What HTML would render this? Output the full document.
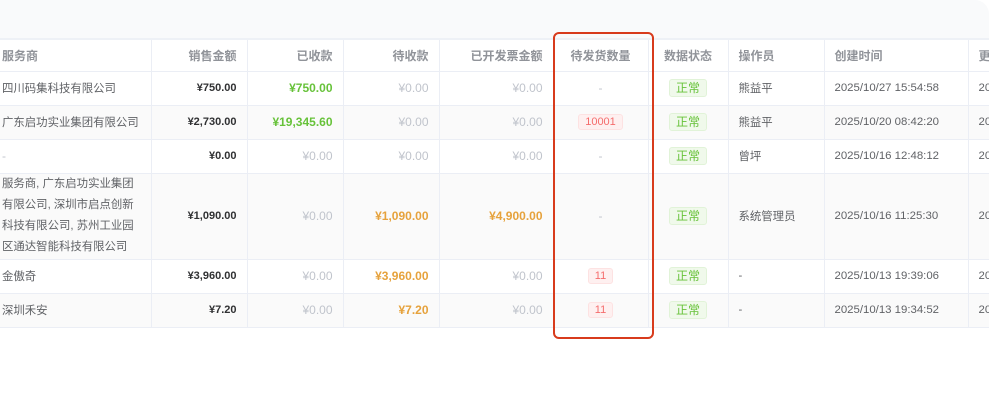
<!DOCTYPE html>
<html><head><meta charset="utf-8"><style>
*{margin:0;padding:0;box-sizing:border-box}
body{width:989px;height:405px;background:#fff;position:relative;overflow:hidden;font-family:"Liberation Sans","Noto Sans CJK SC",sans-serif;font-size:11.4px;color:#606266}
.top{position:absolute;left:0;top:0;width:989px;height:40px;background:#f9fafb;border-top-right-radius:14px;border-bottom:2px solid #eef1f6}
table{position:absolute;left:0;top:40px;border-collapse:collapse;table-layout:fixed;width:989px}
td,th{border-right:1px solid #ebeef5;border-bottom:1px solid #ebeef5;padding:0 10px;font-weight:normal;white-space:nowrap;overflow:hidden}
th{height:31px;color:#909399;font-weight:bold;font-size:12px;text-align:left}
td{height:34px}
td:first-child,th:first-child{padding-left:2px}
tr.s td{background:#fafafa}
.r{text-align:right}.c{text-align:center}
.b{font-weight:bold;color:#303133;font-size:11px}
.g{color:#67c23a;font-weight:bold;font-size:12px}
.o{color:#e6a23c;font-weight:bold;font-size:12px}
.z{color:#c0c4cc;font-size:12px}
.tag{display:inline-block;height:18px;line-height:16px;padding:0 6px;border:1px solid #e1f3d8;background:#f0f9eb;color:#67c23a;border-radius:3px;font-size:12px}
.red{display:inline-block;height:16px;line-height:14px;padding:0 6px;border:1px solid #fde2e2;background:#fef0f0;color:#f56c6c;border-radius:3px;font-size:11px}
.wrap{line-height:21px}
.box{position:absolute;left:553px;top:32px;width:101px;height:307px;border:2px solid #d83b1c;border-radius:6px}
</style></head><body>
<div class="top"></div>
<table>
<colgroup><col style="width:151px"><col style="width:96px"><col style="width:96px"><col style="width:96px"><col style="width:114px"><col style="width:95px"><col style="width:80px"><col style="width:96px"><col style="width:144px"><col style="width:21px"></colgroup>
<tr><th>服务商</th><th class="r">销售金额</th><th class="r">已收款</th><th class="r">待收款</th><th class="r">已开发票金额</th><th class="c">待发货数量</th><th class="c">数据状态</th><th>操作员</th><th>创建时间</th><th style="padding:0 0 0 10px">更</th></tr>
<tr><td>四川码集科技有限公司</td><td class="r b">¥750.00</td><td class="r g">¥750.00</td><td class="r z">¥0.00</td><td class="r z">¥0.00</td><td class="c z">-</td><td class="c"><span class="tag">正常</span></td><td>熊益平</td><td>2025/10/27 15:54:58</td><td style="padding:0 0 0 10px">20</td></tr>
<tr class="s"><td>广东启功实业集团有限公司</td><td class="r b">¥2,730.00</td><td class="r g">¥19,345.60</td><td class="r z">¥0.00</td><td class="r z">¥0.00</td><td class="c"><span class="red">10001</span></td><td class="c"><span class="tag">正常</span></td><td>熊益平</td><td>2025/10/20 08:42:20</td><td style="padding:0 0 0 10px">20</td></tr>
<tr><td class="z">-</td><td class="r b">¥0.00</td><td class="r z">¥0.00</td><td class="r z">¥0.00</td><td class="r z">¥0.00</td><td class="c z">-</td><td class="c"><span class="tag">正常</span></td><td>曾坪</td><td>2025/10/16 12:48:12</td><td style="padding:0 0 0 10px">20</td></tr>
<tr class="s"><td class="wrap" style="height:86px">服务商, 广东启功实业集团<br>有限公司, 深圳市启点创新<br>科技有限公司, 苏州工业园<br>区通达智能科技有限公司</td><td class="r b">¥1,090.00</td><td class="r z">¥0.00</td><td class="r o">¥1,090.00</td><td class="r o">¥4,900.00</td><td class="c z">-</td><td class="c"><span class="tag">正常</span></td><td>系统管理员</td><td>2025/10/16 11:25:30</td><td style="padding:0 0 0 10px">20</td></tr>
<tr><td>金傲奇</td><td class="r b">¥3,960.00</td><td class="r z">¥0.00</td><td class="r o">¥3,960.00</td><td class="r z">¥0.00</td><td class="c"><span class="red">11</span></td><td class="c"><span class="tag">正常</span></td><td>-</td><td>2025/10/13 19:39:06</td><td style="padding:0 0 0 10px">20</td></tr>
<tr class="s"><td>深圳禾安</td><td class="r b">¥7.20</td><td class="r z">¥0.00</td><td class="r o">¥7.20</td><td class="r z">¥0.00</td><td class="c"><span class="red">11</span></td><td class="c"><span class="tag">正常</span></td><td>-</td><td>2025/10/13 19:34:52</td><td style="padding:0 0 0 10px">20</td></tr>
</table>
<div class="box"></div>
</body></html>
